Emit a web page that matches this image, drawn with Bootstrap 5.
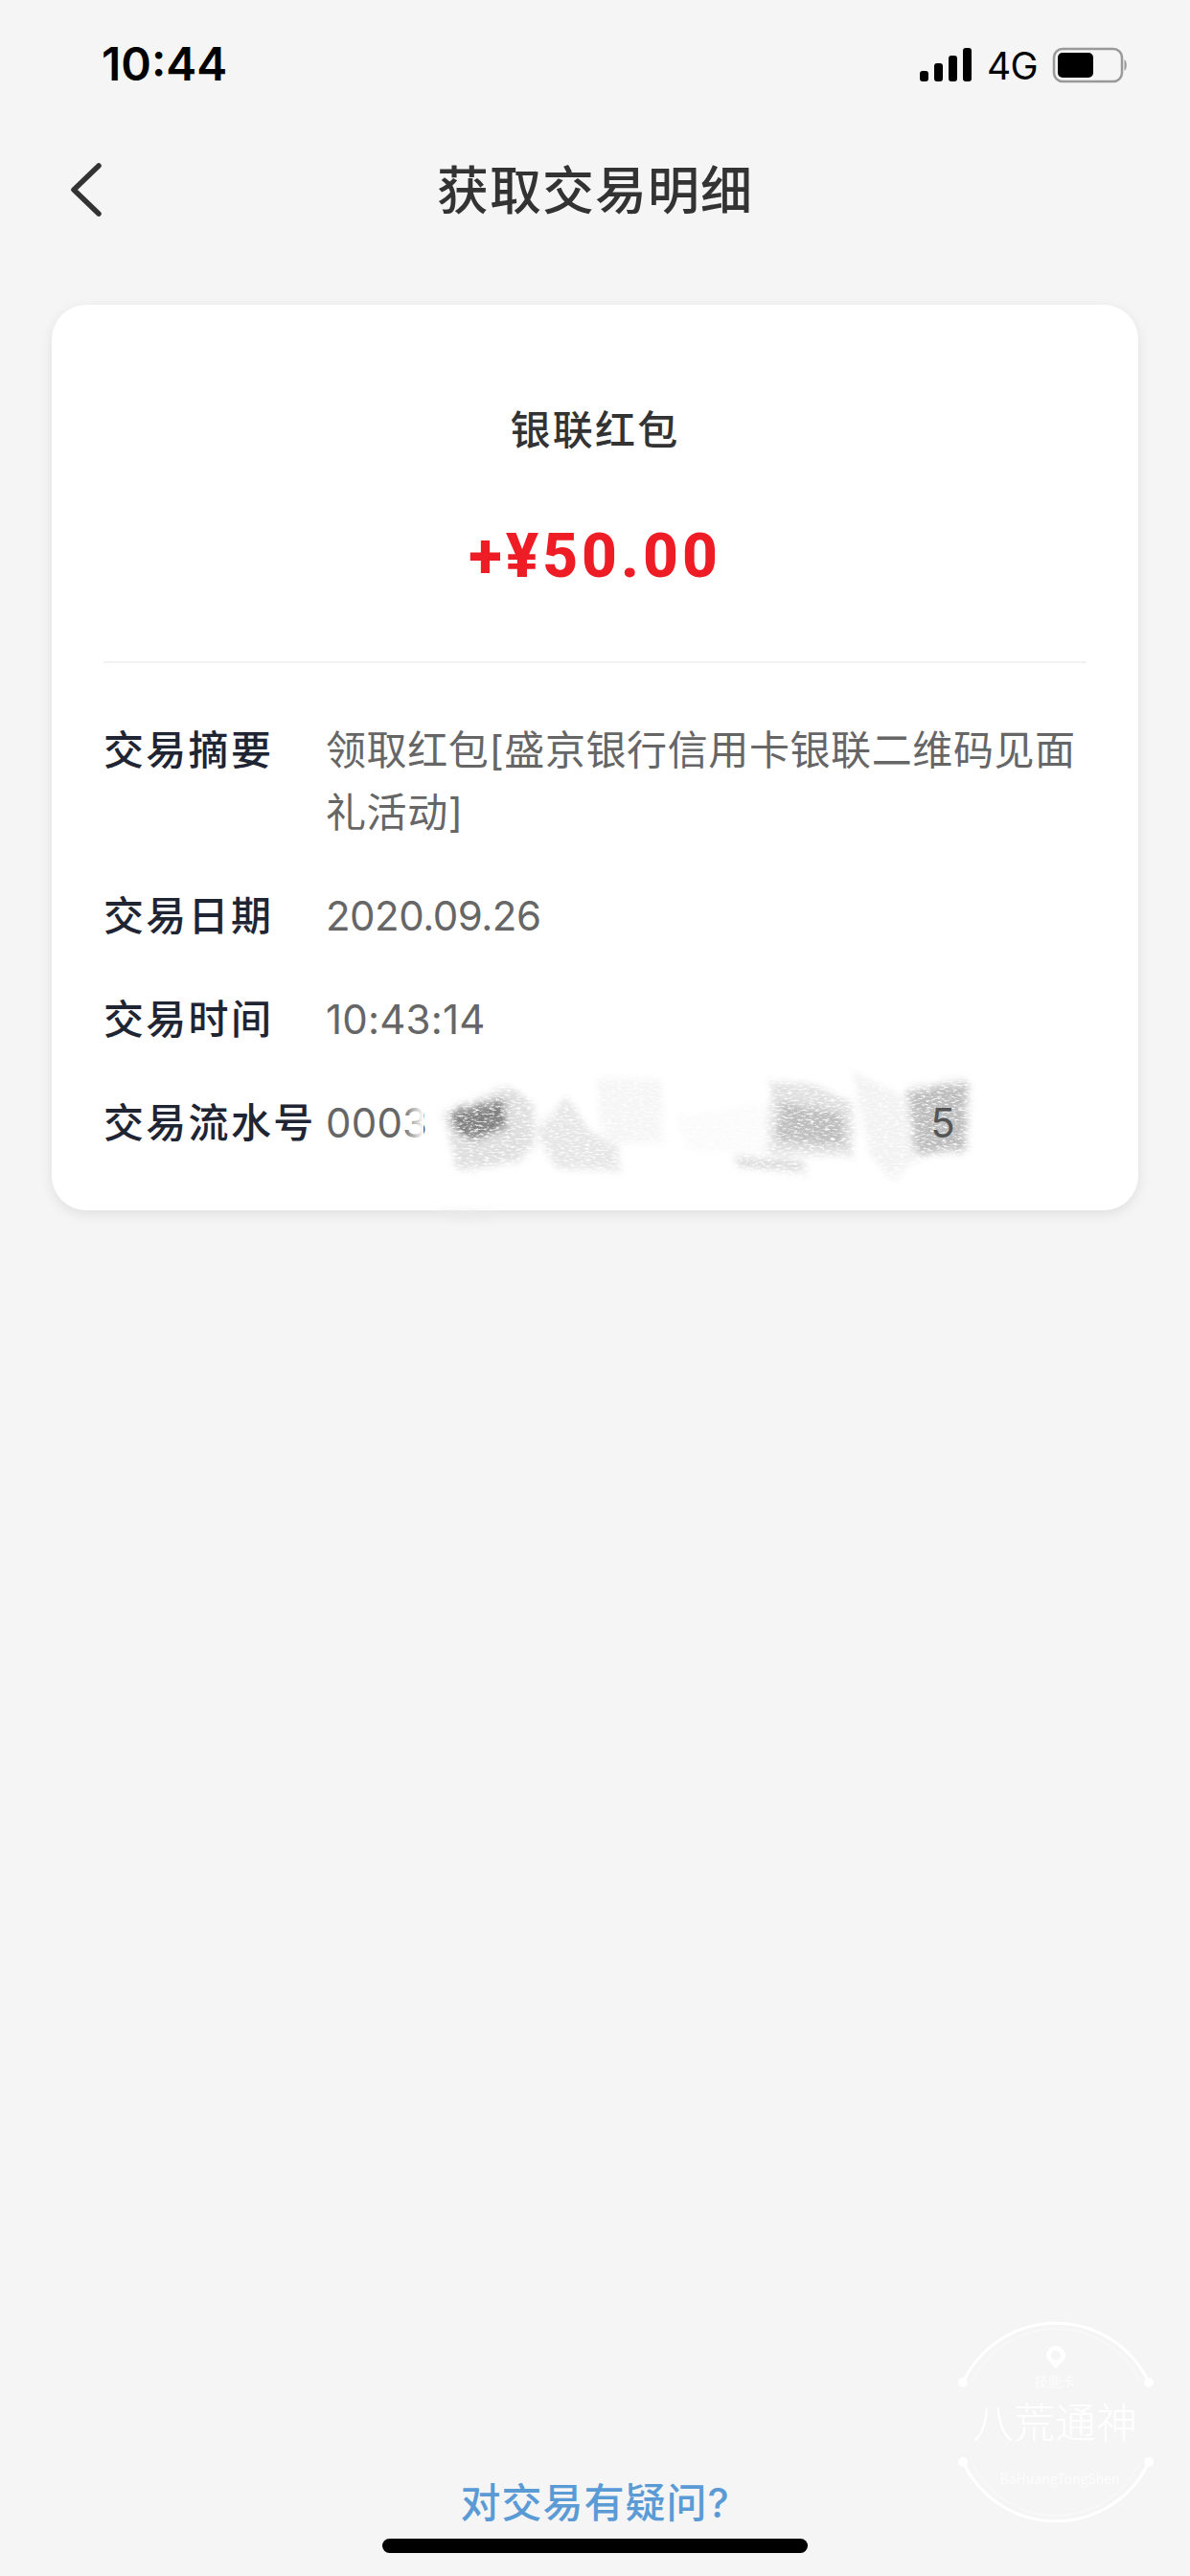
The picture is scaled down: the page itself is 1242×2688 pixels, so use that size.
<!DOCTYPE html>
<html lang="zh-CN">
<head>
<meta charset="utf-8">
<title>获取交易明细</title>
<link href="https://cdn.jsdelivr.net/npm/bootstrap@5.3.0/dist/css/bootstrap.min.css" rel="stylesheet">
<style>
html,body{height:100%;}
body{background:#f5f5f5;font-family:"Inter","Noto Sans CJK SC",sans-serif;color:#333;}
.screen{position:relative;height:2688px;overflow:hidden;}
.status-bar{height:136px;padding:0 64px 0 106px;}
.clock{font-size:48px;font-weight:600;color:#000;letter-spacing:0;line-height:1;transform:translateY(-1px);}
.status-icons{gap:15px;}
.net{font-size:39px;color:#000;line-height:1;letter-spacing:-.6px;}
.nav-line{height:128px;position:relative;}
.back-btn{position:absolute;left:73px;top:34px;line-height:0;}
.page-title{font-size:54px;font-weight:500;color:#333;line-height:1;letter-spacing:1px;}
.receipt{margin:54px 54px 0;border:0;border-radius:36px;box-shadow:0 4px 14px rgba(0,0,0,.09);padding:0 54px;height:945px;position:relative;}
.rc-name{font-size:42px;font-weight:500;color:#333;line-height:1;letter-spacing:2.2px;padding-top:110px;}
.rc-amount{font-family:"Roboto","Noto Sans CJK SC",sans-serif;font-size:64px;font-weight:800;color:#ee1c25;line-height:1;letter-spacing:4px;padding-top:79px;height:190px;}
.rc-rule{height:2px;background:#f2f2f2;margin-top:30px;}
.rc-rows{padding-top:58px;}
.rc-row{display:flex;margin-bottom:43px;font-size:42px;line-height:65px;}
.rc-key{width:232px;flex:none;font-weight:500;color:#1f2533;white-space:nowrap;letter-spacing:2.3px;}
.rc-val{color:#666;letter-spacing:.6px;font-weight:400;}
.rc-date{letter-spacing:-.5px;}
.rc-num{letter-spacing:.2px;}
.rc-last{margin-left:525px;position:relative;z-index:2;color:#555;}
.smudge{position:absolute;left:0;top:0;pointer-events:none;}
.ask-link{font-size:42px;font-weight:500;color:#5b9bd5;line-height:1;letter-spacing:1px;text-decoration:none;}
.home-bar{width:444px;height:15px;background:#000;border-radius:8px;margin:16px auto 24px;}
.stamp{position:absolute;left:960px;top:2380px;}
.stamp text{fill:#fff;font-family:"Noto Sans CJK SC",sans-serif;}
</style>
</head>
<body>
<div class="screen d-flex flex-column">
  <div class="status-bar d-flex align-items-center justify-content-between">
    <span class="clock">10:44</span>
    <div class="status-icons d-flex align-items-center">
      <svg width="56" height="36" viewBox="0 0 56 36" aria-hidden="true">
        <rect x="1" y="24" width="9" height="11" rx="3" fill="#000"/>
        <rect x="16" y="16" width="9" height="19" rx="3" fill="#000"/>
        <rect x="31" y="8" width="9" height="27" rx="3" fill="#000"/>
        <rect x="46" y="0" width="9" height="35" rx="3" fill="#000"/>
      </svg>
      <span class="net">4G</span>
      <svg width="80" height="38" viewBox="0 0 80 38" aria-hidden="true">
        <rect x="2" y="2" width="71" height="34" rx="9" fill="none" stroke="#999" stroke-width="2.500"/>
        <rect x="6" y="6" width="37" height="26" rx="5" fill="#000"/>
        <path d="M75.500 13c3 1.500 3 10.500 0 12z" fill="#999"/>
      </svg>
    </div>
  </div>
  <div class="nav-line d-flex align-items-center justify-content-center">
    <a class="back-btn" href="#" aria-label="返回">
      <svg width="34" height="56" viewBox="0 0 34 56"><path d="M30 3 4 28 30 53" fill="none" stroke="#333" stroke-width="5.500" stroke-linecap="round" stroke-linejoin="round"/></svg>
    </a>
    <h1 class="page-title m-0">获取交易明细</h1>
  </div>
  <div class="card receipt">
    <div class="rc-name text-center">银联红包</div>
    <div class="rc-amount text-center">+¥50.00</div>
    <div class="rc-rule"></div>
    <div class="rc-rows">
      <div class="rc-row"><div class="rc-key">交易摘要</div><div class="rc-val">领取红包[盛京银行信用卡银联二维码见面礼活动]</div></div>
      <div class="rc-row"><div class="rc-key">交易日期</div><div class="rc-val rc-date">2020.09.26</div></div>
      <div class="rc-row"><div class="rc-key">交易时间</div><div class="rc-val rc-num">10:43:14</div></div>
      <div class="rc-row"><div class="rc-key">交易流水号</div><div class="rc-val rc-num">0003<span class="rc-last">5</span></div></div>
    </div>
  </div>
  <svg class="smudge" width="1242" height="1300" viewBox="0 0 1242 1300" aria-hidden="true">
    <defs>
      <filter id="pencil" x="-10%" y="-10%" width="120%" height="120%">
        <feTurbulence type="fractalNoise" baseFrequency=".18 .5" numOctaves="4" seed="7" result="n"/>
        <feDisplacementMap in="SourceGraphic" in2="n" scale="22" result="d"/>
        <feGaussianBlur in="d" stdDeviation="3" result="b"/>
        <feColorMatrix in="n" type="matrix" values="0 0 0 0 0 0 0 0 0 0 0 0 0 0 0 3 0 0 0 -.6" result="m"/>
        <feComposite in="b" in2="m" operator="in"/>
        <feGaussianBlur stdDeviation=".7"/>
      </filter>
      <linearGradient id="fadeout" x1="0" x2="1" y1="0" y2="0">
        <stop offset="0" stop-color="#fff" stop-opacity="0"/>
        <stop offset="1" stop-color="#fff"/>
      </linearGradient>
    </defs>
    <rect x="420" y="1150" width="22" height="50" fill="url(#fadeout)"/>
    <g filter="url(#pencil)">
      <path d="M462 1165 530 1133 556 1150 558 1195 540 1212 478 1222 470 1190z" fill="#dedede"/>
      <path d="M470 1160 526 1146 528 1178 492 1190 476 1180z" fill="#808080"/>
      <path d="M560 1180 592 1143 615 1180 646 1196 646 1222 580 1220z" fill="#e6e6e6"/>
      <path d="M622 1126 690 1125 692 1192 630 1194z" fill="#f5f5f5"/>
      <path d="M705 1165 800 1150 806 1205 715 1200z" fill="#fbfbfb"/>
      <path d="M805 1128 850 1132 890 1150 890 1205 802 1205z" fill="#e0e0e0"/>
      <path d="M815 1150 880 1162 880 1195 810 1190z" fill="#bdbdbd"/>
      <path d="M768 1208 840 1212 838 1223 768 1216z" fill="#d4d4d4"/>
      <path d="M890 1118 955 1150 958 1210 930 1232 908 1205z" fill="#f2f2f2"/>
      <path d="M948 1138 1010 1128 1008 1200 956 1205z" fill="#bcbcbc"/>
      <path d="M458 1264 520 1264 510 1271 468 1271z" fill="#eaeaea"/>
    </g>
  </svg>
  <div class="mt-auto text-center">
    <a class="ask-link" href="#">对交易有疑问?</a>
    <div class="home-bar"></div>
  </div>
  <svg class="stamp" width="282" height="280" viewBox="0 0 282 280" aria-hidden="true">
    <g fill="none" stroke="#fff" stroke-linecap="round">
      <path stroke-width="3" d="M45 106A107 107 0 0 1 239 106"/>
      <path stroke-width="3" d="M45 189A107 107 0 0 0 239 189"/>
      <path stroke-width="1" opacity=".5" d="M55 104A97 97 0 0 1 229 104"/>
      <path stroke-width="1" opacity=".5" d="M55 191A97 97 0 0 0 229 191"/>
    </g>
    <g fill="#fff">
      <circle cx="45" cy="106" r="5"/><circle cx="239" cy="106" r="5"/>
      <circle cx="45" cy="189" r="5"/><circle cx="239" cy="189" r="5"/>
      <path fill-rule="evenodd" d="M142 68c-6 0-10 5-10 10 0 5 6 8 10 14 4-6 10-9 10-14 0-5-4-10-10-10zm0 5a5 5 0 1 1 0 10 5 5 0 0 1 0-10z"/>
    </g>
    <text x="141" y="110" text-anchor="middle" font-size="14" opacity=".7">技能卡</text>
    <text x="141" y="164" text-anchor="middle" font-size="43" font-weight="300">八荒通神</text>
    <text x="146" y="212" text-anchor="middle" font-size="14" opacity=".7">BaHuangTongShen</text>
  </svg>
</div>
<script src="https://cdn.jsdelivr.net/npm/bootstrap@5.3.0/dist/js/bootstrap.bundle.min.js"></script>
</body>
</html>
